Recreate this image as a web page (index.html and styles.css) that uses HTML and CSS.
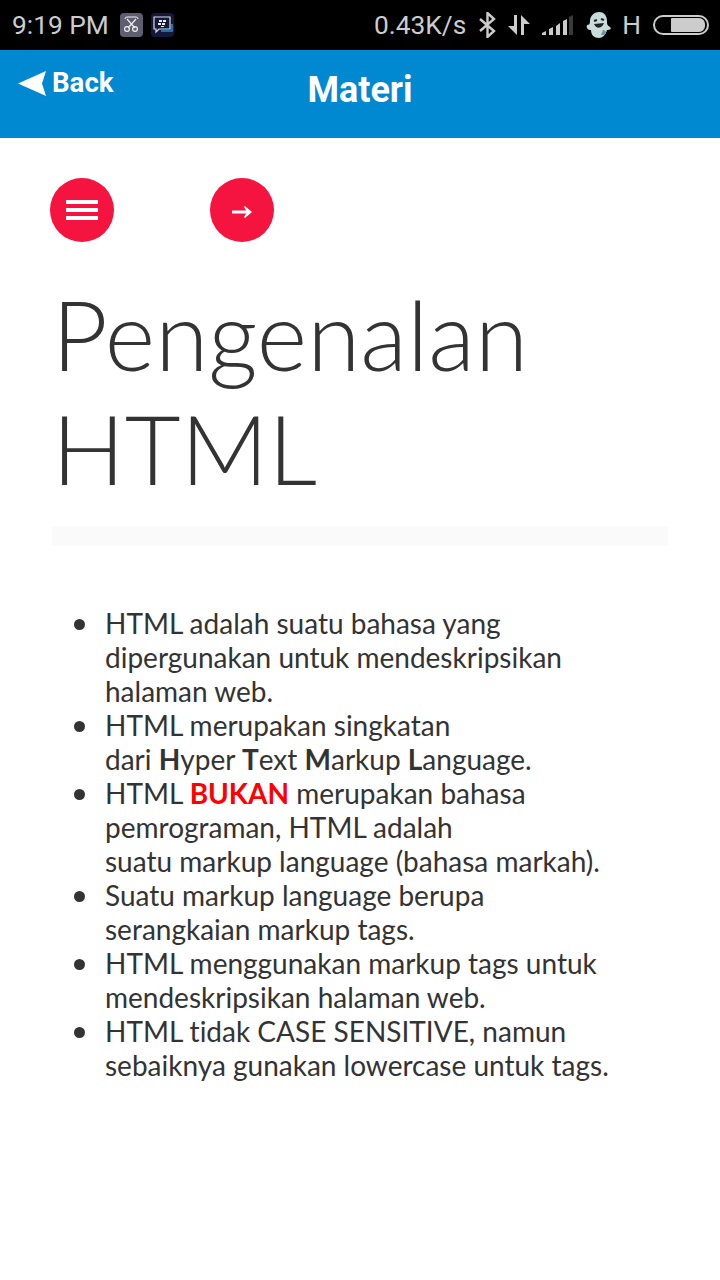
FILE: index.html
```html
<!DOCTYPE html>
<html lang="id">
<head>
<meta charset="utf-8">
<title>Materi</title>
<link rel="stylesheet" href="styles.css">
</head>
<body>
<div class="status">
  <div class="status-left">
    <span class="time">9:19 PM</span>
    <svg class="ic-scissors" width="23" height="24" viewBox="0 0 23 24"><rect x="0" y="0" width="23" height="24" rx="4" fill="#5d5f70"/><path d="M7 6l8 9M16 6l-8 9" stroke="#eee" stroke-width="1.2" fill="none"/><circle cx="7" cy="16" r="2.4" stroke="#eee" stroke-width="1.2" fill="none"/><circle cx="15" cy="16" r="2.4" stroke="#eee" stroke-width="1.2" fill="none"/><path d="M5 6q0 -2 2 -2h9q2 0 2 2" stroke="#eee" stroke-width="1" fill="none"/></svg>
    <svg class="ic-bbm" width="23" height="24" viewBox="0 0 23 24"><rect width="23" height="24" rx="4" fill="#14183a"/><path d="M3 4h16v12H8l-3 3v-3H3z" fill="#14183a" stroke="#ddd" stroke-width="1.2"/><path d="M8 7h3v2H8zM12 7h3v2h-3zM7 10h3v2H7zM11 10h3v2h-3zM10 13h3v1h-3z" fill="#eee"/><path d="M10 18h11v-7" stroke="#1b8fd6" stroke-width="1.6" fill="none"/></svg>
  </div>
  <div class="status-right">
    <span class="speed">0.43K/s</span>
    <svg class="ic-bt" width="17" height="26" viewBox="0 0 17 26"><path d="M1 7l14 12-6.500 6V1L15 7 1 19" stroke="#ccc" stroke-width="2.400" fill="none"/></svg>
    <svg class="ic-data" width="22" height="22" viewBox="0 0 22 22"><path d="M9 1v20L0 12h6V1zM13 21V1l9 9h-6v11z" fill="#ccc"/></svg>
    <svg class="ic-signal" width="31" height="20" viewBox="0 0 31 20"><path d="M0 20v-2l4-2v4zM7 20v-6l4-2v8zM14 20V11l4-3v12zM21 20V6l4-2v16z" fill="#ccc"/><path d="M27 20V2l4-2v20z" fill="#3a3a3a"/></svg>
    <svg class="ic-ghost" width="26" height="28" viewBox="0 0 26 28"><path d="M13 1c6 0 8 5 8 9 0 3 0 4 3 6 2 2 0 3-3 3-1 5-5 8-8 8-5 0-8-3-8-8-3 0-5-2-4-5 2 0 3-1 3-4C4 5 8 1 13 1z" fill="#c9dcdc"/><path d="M8 10l3-1M15 8l3 1" stroke="#222" stroke-width="2.200"/><path d="M8 13c2 5 8 5 10-1z" fill="#222"/><path d="M17 19c3 0 4 3 1 5h-3z" fill="#5f9aa6"/></svg>
    <span class="net">H</span>
    <div class="battery"><div class="battery-fill"></div></div>
  </div>
</div>
<header class="bar">
  <a class="back"><svg width="28" height="25" viewBox="0 0 28 25"><path d="M0 12.500L28 0 24 12.500 28 25z" fill="#fff"/></svg><span>Back</span></a>
  <h1 class="bar-title">Materi</h1>
</header>
<main class="content">
  <div class="buttons">
    <a class="round"><span class="burger"><i></i><i></i><i></i></span></a>
    <a class="round"><svg class="arrow" width="22" height="14" viewBox="0 0 22 14"><path d="M1 7h18" stroke="#fff" stroke-width="3"/><path d="M14 1l7 6-7 6-1-1 3-5-3-5z" fill="#fff"/></svg></a>
  </div>
  <h2 class="title">Pengenalan HTML</h2>
  <div class="rule"></div>
  <ul class="list">
    <li>HTML adalah suatu bahasa yang dipergunakan untuk mendeskripsikan halaman web.</li>
    <li>HTML merupakan singkatan<br>dari <b>H</b>yper <b>T</b>ext <b>M</b>arkup <b>L</b>anguage.</li>
    <li>HTML <b class="red">BUKAN</b> merupakan bahasa pemrograman, HTML adalah<br>suatu markup language (bahasa markah).</li>
    <li>Suatu markup language berupa<br>serangkaian markup tags.</li>
    <li>HTML menggunakan markup tags untuk mendeskripsikan halaman web.</li>
    <li>HTML tidak CASE SENSITIVE, namun sebaiknya gunakan lowercase untuk tags.</li>
  </ul>
</main>
</body>
</html>
```
FILE: styles.css
```css
* { box-sizing: border-box; }
html, body { margin: 0; padding: 0; background: #fff; }
body { width: 720px; height: 1280px; overflow: hidden; font-family: Lato, sans-serif; color: #333; }
.status { height: 50px; background: #000; color: #ccc; display: flex; justify-content: space-between; align-items: center; padding: 0 11px 0 12px; font-family: Roboto, sans-serif; font-size: 26.300px; }
.status-left, .status-right { display: flex; align-items: center; }
.time { margin-right: 11px; }
.ic-scissors { margin-right: 8px; }
.ic-bt { margin-left: 13px; }
.ic-data { margin-left: 12px; }
.ic-signal { margin-left: 12px; }
.ic-ghost { margin-left: 13px; }
.net { margin-left: 10px; }
.battery { width: 56px; height: 20px; margin-left: 12px; border: 2px solid #ccc; border-radius: 10px; padding: 1px 2px; display: flex; justify-content: flex-end; }
.battery-fill { width: 34px; height: 14px; background: #ccc; border-radius: 1px 6px 6px 1px; }
.bar { height: 88px; background: #0088d1; position: relative; display: flex; justify-content: center; color: #fff; font-family: Roboto, sans-serif; }
.bar-title { margin: 19px 0 0; font-size: 36px; line-height: 42px; font-weight: 700; }
.back { position: absolute; left: 18px; top: 16px; display: flex; align-items: center; gap: 6px; font-size: 27.600px; font-weight: 700; line-height: 34px; }
.content { padding: 40px 52px 0; }
.buttons { display: flex; gap: 96px; margin-left: -2px; }
.round { width: 64px; height: 64px; border-radius: 50%; background: #f5133f; display: flex; align-items: center; justify-content: center; }
.burger { display: flex; flex-direction: column; gap: 4px; width: 32px; }
.burger i { display: block; height: 4px; background: #fff; }
.arrow { margin-top: 3px; }
.title { margin: 35px 0 0; font-family: Lato, sans-serif; font-weight: 300; font-size: 96.500px; line-height: 114px; color: #333; width: 560px; }
.rule { height: 20px; background: #fafafa; margin-top: 21px; }
.list { margin: 60px 0 0; padding: 0 0 0 53px; list-style: none; font-size: 28px; line-height: 34px; color: #333; font-variant-ligatures: none; }
.list li { position: relative; }
.list li::before { content: ""; position: absolute; left: -31px; top: 13px; width: 11px; height: 11px; border-radius: 50%; background: #333; }
.red { color: #f00; }
```
